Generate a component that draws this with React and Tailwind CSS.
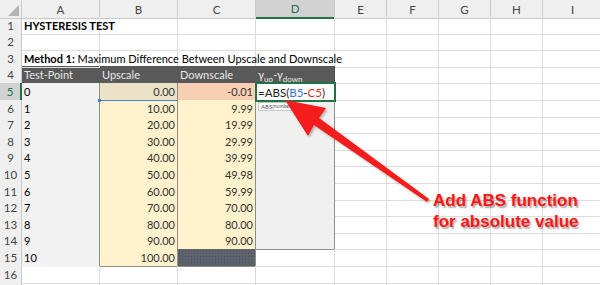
const COLS = ["A", "B", "C", "D", "E", "F", "G", "H", "I", "J"];
// row heights alternate 16/17 to follow the ~16.6px pitch of the sheet
const ROW_H = {
  1: "h-4", 2: "h-[17px]", 3: "h-4", 4: "h-[17px]", 5: "h-[17px]", 6: "h-4", 7: "h-[17px]", 8: "h-4",
  9: "h-[17px]", 10: "h-[17px]", 11: "h-4", 12: "h-[17px]", 13: "h-4", 14: "h-[17px]", 15: "h-[17px]", 16: "h-4", 17: "h-[17px]",
};
const UP = ["0.00", "10.00", "20.00", "30.00", "40.00", "50.00", "60.00", "70.00", "80.00", "90.00", "100.00"];
const DOWN = ["-0.01", "9.99", "19.99", "29.99", "39.99", "49.98", "59.99", "70.00", "80.00", "90.00"];

const GRID = "grid grid-cols-[22px_78px_78px_78px_79px_52px_52px_52px_52px_60px]";
const LINE = "border-r border-b border-[#dcdcdc]";
const DARK = "bg-[#595959] text-[#e8e8e8] border-b border-[#4a4a4a]";

function Cell({ className = "", children }) {
  return <div className={`flex items-end pb-[1px] px-[2px] leading-[14px] whitespace-nowrap ${className}`}>{children}</div>;
}

function HeaderRow() {
  return (
    <div className={`${GRID} h-[17px] text-[11.5px]`}>
      <div className="relative bg-[#efefef] border-r border-b border-[#c9c9c9]">
        <div className="absolute right-[2px] bottom-[2px] w-0 h-0 border-l-[11px] border-l-transparent border-b-[11px] border-b-[#b4b4b4]" />
      </div>
      {COLS.map((c) =>
        c === "D" ? (
          <div key={c} className="flex items-center justify-center bg-[#d2d2d2] text-[#217346] border-r border-[#c9c9c9] border-b-2 border-b-[#217346]">
            {c}
          </div>
        ) : (
          <div key={c} className="flex items-center justify-center bg-[#efefef] text-[#444] border-r border-b border-[#c9c9c9]">
            {c}
          </div>
        )
      )}
    </div>
  );
}

function rowCells(r) {
  const tbl = r >= 5 && r <= 15;
  const i = r - 5;
  const cells = [];

  // A
  if (r === 1) cells.push(<Cell key="A" className={`${LINE} font-bold text-black`}>HYSTERESIS TEST</Cell>);
  else if (r === 3)
    cells.push(
      <Cell key="A" className={`${LINE} text-black relative z-10`}>
        <span className="font-bold">Method 1:</span>&nbsp;Maximum Difference Between Upscale and Downscale
      </Cell>
    );
  else if (r === 4) cells.push(<Cell key="A" className={DARK}>Test-Point</Cell>);
  else if (tbl) cells.push(<Cell key="A" className="bg-[#f2f2f2] text-black border-r border-r-[#8f8f80] border-b border-b-[#f2f2f2]">{i}</Cell>);
  else cells.push(<Cell key="A" className={LINE} />);

  // B
  if (r === 4) cells.push(<Cell key="B" className={DARK}>Upscale</Cell>);
  else if (r === 5)
    cells.push(
      <Cell key="B" className="relative justify-end bg-[#ebe2c8] text-[#333] border-r border-r-[#8f8f80] border-b border-b-[#4a7fd6]">
        0.00
        <div className="absolute -left-[2px] -bottom-[2px] w-[3px] h-[3px] bg-[#4a7fd6]" />
      </Cell>
    );
  else if (tbl) cells.push(<Cell key="B" className="justify-end bg-[#fff2cc] text-[#333] border-r border-b border-[#8f8f80]">{UP[i]}</Cell>);
  else cells.push(<Cell key="B" className={LINE} />);

  // C
  if (r === 4) cells.push(<Cell key="C" className={DARK}>Downscale</Cell>);
  else if (r === 5) cells.push(<Cell key="C" className="justify-end bg-[#f9cfb4] text-[#333] border-r border-r-[#8f8f80] border-b border-b-[#e0463a]">-0.01</Cell>);
  else if (r === 15) cells.push(<Cell key="C" className="bg-[#5d626c] bg-[radial-gradient(#4e535c_35%,transparent_40%)] bg-[length:3px_3px] border-r border-b border-[#8f8f80]" />);
  else if (tbl) cells.push(<Cell key="C" className="justify-end bg-[#fff2cc] text-[#333] border-r border-b border-[#8f8f80]">{DOWN[i]}</Cell>);
  else cells.push(<Cell key="C" className={LINE} />);

  // D
  if (r === 4)
    cells.push(
      <Cell key="D" className={`${DARK} border-r`}>
        <span>γ</span>
        <span className="text-[8px] leading-none relative top-[1px]">up</span>
        <span>-γ</span>
        <span className="text-[8px] leading-none relative top-[1px]">down</span>
      </Cell>
    );
  else if (r === 5)
    cells.push(
      <Cell key="D" className="relative z-20 bg-white text-[#222] text-[11.5px] outline-2 outline-[#217346] -outline-offset-1">
        =ABS(<span className="text-[#3b6fd1]">B5</span>-<span className="text-[#d8322b]">C5</span>)
        <div className="absolute left-[2px] top-[19px] h-[9px] px-[2px] flex items-center bg-white border border-[#c6c6c6] text-[6px] text-[#555] leading-none">
          ABS(<span className="text-[5px]">number</span>)
        </div>
      </Cell>
    );
  else if (r >= 6 && r <= 14) cells.push(<Cell key="D" className="bg-[#f0f0f0] border-r border-b border-[#8f8f8f]" />);
  else cells.push(<Cell key="D" className={LINE} />);

  ["E", "F", "G", "H", "I", "J"].forEach((c) => cells.push(<Cell key={c} className={LINE} />));
  return cells;
}

function Row({ r }) {
  const sel = r === 5;
  return (
    <div className={`${GRID} ${ROW_H[r]} text-[11px]`}>
      {sel ? (
        <div className="flex items-center justify-center bg-[#d2d2d2] text-[11.5px] text-[#217346] border-b border-[#c9c9c9] border-r-2 border-r-[#217346]">{r}</div>
      ) : (
        <div className="flex items-center justify-center bg-[#efefef] text-[11.5px] text-[#444] border-r border-b border-[#c9c9c9]">{r}</div>
      )}
      {rowCells(r)}
    </div>
  );
}

export default function App() {
  const rows = Array.from({ length: 17 }, (_, k) => k + 1);
  return (
    <div className="relative w-[600px] h-[285px] overflow-hidden bg-white font-['Lato',sans-serif]">
      <HeaderRow />
      {rows.map((r) => (
        <Row key={r} r={r} />
      ))}

      <svg className="absolute left-0 top-0 z-30 pointer-events-none" width="600" height="285">
        <defs>
          <filter id="sh" x="-10%" y="-10%" width="130%" height="130%">
            <feDropShadow dx="1.5" dy="1.5" stdDeviation="1" floodColor="#000" floodOpacity="0.3" />
          </filter>
        </defs>
        <polygon
          filter="url(#sh)"
          fill="#f41a1a"
          points="285,100 326,108 319,118 429,199 427,202 314,125 308,136"
        />
      </svg>

      <div className="absolute left-[433px] top-[190px] z-30 text-[17px] leading-[21px] font-bold text-[#ff1414] font-['Liberation_Sans',Arial,sans-serif] [text-shadow:1.5px_1.5px_1.5px_rgba(0,0,0,0.35)]">
        <div>Add ABS function</div>
        <div>for absolute value</div>
      </div>
    </div>
  );
}
